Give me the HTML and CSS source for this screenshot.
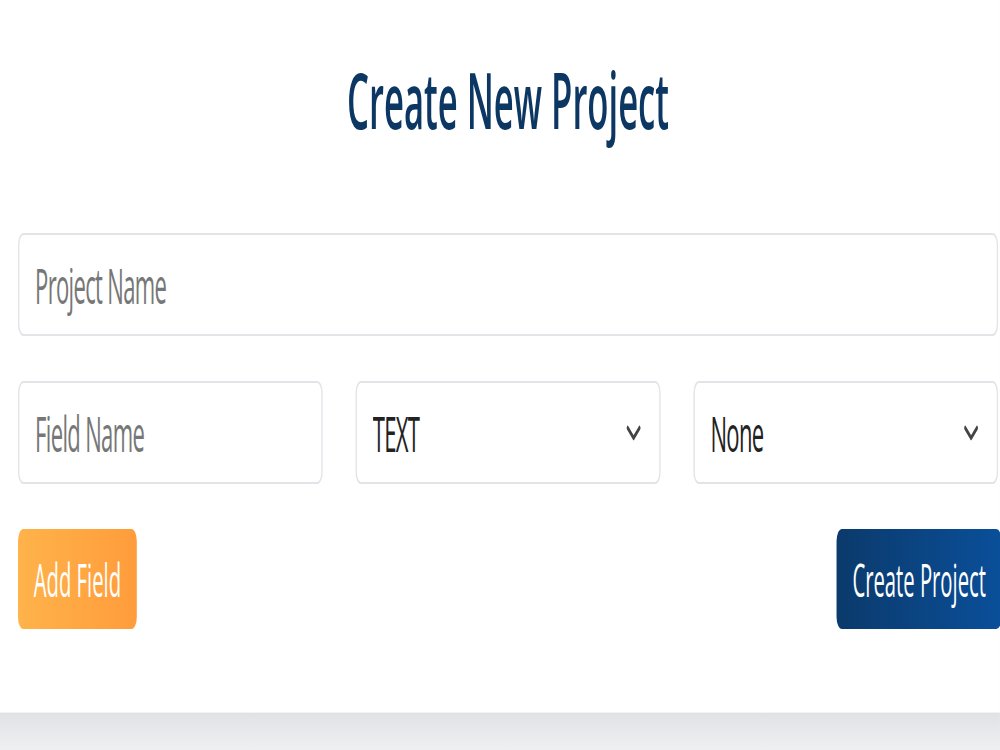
FILE: index.html
```html
<!DOCTYPE html>
<html lang="en">
<head>
  <meta charset="UTF-8">
  <title>Create New Project</title>
  <link rel="stylesheet" href="styles.css">
</head>
<body>

  <div class="page">
    <div class="card">
      <h1>Create New Project</h1>

      <input type="text" class="field project-name" placeholder="Project Name">

      <div class="field-row">
        <input type="text" class="field" placeholder="Field Name">
        <select class="field">
          <option>TEXT</option>
          <option>NUMBER</option>
          <option>DATE</option>
        </select>
        <select class="field">
          <option>None</option>
          <option>Required</option>
          <option>Unique</option>
        </select>
      </div>

      <div class="actions">
        <button class="btn add">Add Field</button>
        <button class="btn create">Create Project</button>
      </div>
    </div>
    <div class="footer"></div>
  </div>

</body>
</html>
```

FILE: styles.css
```css
:root {
  --navy: #0d3763;
  --border: #e3e3e8;
  --orange-1: #ffb34a;
  --orange-2: #ff9c3b;
  --blue-1: #0b3a6b;
  --blue-2: #0a4f9a;
}

html, body {
  margin: 0;
  overflow: hidden;
}

body {
  font-family: 'Open Sans', 'Noto Sans', sans-serif;
  background: #eff0f2;
}

/* the whole page is drawn squeezed sideways */
.page {
  width: 2222px;
  transform: scaleX(0.45);
  transform-origin: 0 0;
}

.card {
  background: #fff;
  padding: 0 4px 83px 40px;
}

.footer {
  height: 38px;
  border-top: 1px solid #f3f3f4;
  background: linear-gradient(#e1e2e5, #eff0f2);
}

h1 {
  margin: 0;
  padding: 54px 0 87px;
  font-size: 77px;
  line-height: 92px;
  font-weight: 600;
  color: var(--navy);
  text-align: center;
}

.field {
  box-sizing: border-box;
  display: block;
  width: 100%;
  height: 103px;
  padding: 0 35px;
  border: 2px solid var(--border);
  border-width: 2px 3px;
  border-radius: 12px;
  background: #fff;
  font-family: inherit;
  font-size: 49px;
  letter-spacing: -1.5px;
  color: #222;
  outline: none;
}

.field::placeholder {
  color: #777;
}

select.field {
  appearance: none;
  -webkit-appearance: none;
  background-image: url("data:image/svg+xml,%3Csvg xmlns='http://www.w3.org/2000/svg' width='34' height='16' viewBox='0 0 34 16'%3E%3Cpath d='M4 3 L17 13 L30 3' fill='none' stroke='%23444' stroke-width='4.5' stroke-linecap='round' stroke-linejoin='round'/%3E%3C/svg%3E");
  background-repeat: no-repeat;
  background-position: right 40px center;
  background-size: 34px 16px;
}

.field-row {
  display: grid;
  grid-template-columns: 1fr 1fr 1fr;
  gap: 73px;
  margin-top: 45px;
}

.actions {
  display: flex;
  justify-content: space-between;
  margin-top: 45px;
}

.btn {
  height: 100px;
  padding: 0 35px;
  border: none;
  border-radius: 12px;
  font-family: inherit;
  font-size: 45px;
  color: #fff;
  cursor: pointer;
}

.btn.add {
  background: linear-gradient(90deg, var(--orange-1), var(--orange-2));
}

.btn.create {
  margin-right: -8px;
  background: linear-gradient(90deg, var(--blue-1), var(--blue-2));
}
```
